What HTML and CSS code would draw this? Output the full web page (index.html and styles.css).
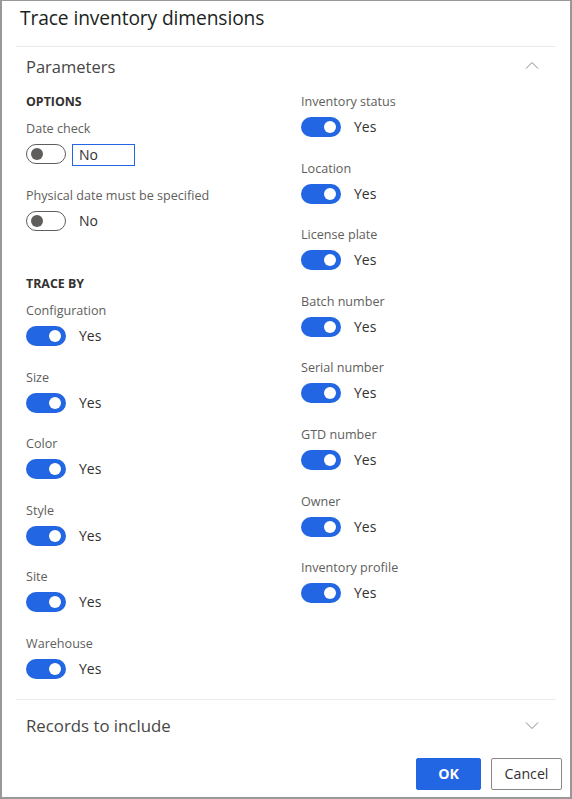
FILE: index.html
```html
<!DOCTYPE html>
<html>
<head>
<meta charset="utf-8">
<link rel="stylesheet" href="styles.css">
</head>
<body>
<div class="dialog">
  <div class="title">Trace inventory dimensions</div>
  <div class="section params">
    <div class="section-header">
      <span class="section-title">Parameters</span>
      <svg class="chev" width="14" height="8" viewBox="0 0 14 8"><polyline points="1,7.5 7,1.5 13,7.5" fill="none" stroke="#8a8886" stroke-width="1"/></svg>
    </div>
    <div class="columns">
      <div class="col">
        <div class="group-title">OPTIONS</div>
        <div class="field">
          <div class="label">Date check</div>
          <div class="control"><span class="toggle off"></span><span class="value boxed">No</span></div>
        </div>
        <div class="field">
          <div class="label">Physical date must be specified</div>
          <div class="control"><span class="toggle off"></span><span class="value">No</span></div>
        </div>
        <div class="group-title second">TRACE BY</div>
        <div class="field"><div class="label">Configuration</div><div class="control"><span class="toggle on"></span><span class="value">Yes</span></div></div>
        <div class="field"><div class="label">Size</div><div class="control"><span class="toggle on"></span><span class="value">Yes</span></div></div>
        <div class="field"><div class="label">Color</div><div class="control"><span class="toggle on"></span><span class="value">Yes</span></div></div>
        <div class="field"><div class="label">Style</div><div class="control"><span class="toggle on"></span><span class="value">Yes</span></div></div>
        <div class="field"><div class="label">Site</div><div class="control"><span class="toggle on"></span><span class="value">Yes</span></div></div>
        <div class="field last"><div class="label">Warehouse</div><div class="control"><span class="toggle on"></span><span class="value">Yes</span></div></div>
      </div>
      <div class="col">
        <div class="field"><div class="label">Inventory status</div><div class="control"><span class="toggle on"></span><span class="value">Yes</span></div></div>
        <div class="field"><div class="label">Location</div><div class="control"><span class="toggle on"></span><span class="value">Yes</span></div></div>
        <div class="field"><div class="label">License plate</div><div class="control"><span class="toggle on"></span><span class="value">Yes</span></div></div>
        <div class="field"><div class="label">Batch number</div><div class="control"><span class="toggle on"></span><span class="value">Yes</span></div></div>
        <div class="field"><div class="label">Serial number</div><div class="control"><span class="toggle on"></span><span class="value">Yes</span></div></div>
        <div class="field"><div class="label">GTD number</div><div class="control"><span class="toggle on"></span><span class="value">Yes</span></div></div>
        <div class="field"><div class="label">Owner</div><div class="control"><span class="toggle on"></span><span class="value">Yes</span></div></div>
        <div class="field"><div class="label">Inventory profile</div><div class="control"><span class="toggle on"></span><span class="value">Yes</span></div></div>
      </div>
    </div>
  </div>
  <div class="section records">
    <div class="section-header tall">
      <span class="section-title">Records to include</span>
      <svg class="chev" width="14" height="8" viewBox="0 0 14 8"><polyline points="1,0.5 7,6.5 13,0.5" fill="none" stroke="#8a8886" stroke-width="1"/></svg>
    </div>
  </div>
  <div class="footer">
    <button class="btn primary">OK</button>
    <button class="btn">Cancel</button>
  </div>
</div>
</body>
</html>
```

FILE: styles.css
```css
html, body {
  margin: 0;
  padding: 0;
  background: #ffffff;
}
body {
  font-family: "Open Sans", "Noto Sans", "Liberation Sans", sans-serif;
  color: #323130;
}
.dialog {
  width: 572px;
  height: 799px;
  box-sizing: border-box;
  border: 2px solid #9a9896;
  border-top-width: 1px;
  display: flex;
  flex-direction: column;
  background: #fff;
}
.title {
  height: 45px;
  box-sizing: border-box;
  padding: 4px 0 0 18px;
  font-size: 19.2px;
  line-height: 26px;
  color: #201f1e;
  letter-spacing: -0.1px;
}
.section {
  margin: 0 14px;
  border-top: 1px solid #edebe9;
}
.section-header {
  height: 38px;
  display: flex;
  align-items: center;
  justify-content: space-between;
  padding: 0 17px 0 10px;
}
.section-header.tall {
  height: 52px;
  padding-right: 17px;
}
.section-title {
  font-size: 16.5px;
  color: #484644;
}
.records .section-title {
  font-size: 16.8px;
}
.chev {
  display: block;
}
.params .chev {
  margin-top: -2px;
}
.columns {
  display: grid;
  grid-template-columns: 275px 1fr;
  padding: 8px 10px 0 10px;
}
.col {
  display: flex;
  flex-direction: column;
}
.group-title {
  font-size: 12.4px;
  font-weight: 700;
  line-height: 18px;
  margin-bottom: 9px;
  color: #323130;
}
.group-title.second {
  margin-top: 21.8px;
}
.field {
  height: 66.6px;
}
.col .field.last {
  height: 64px;
}
.label {
  font-size: 12.6px;
  line-height: 18px;
  color: #605e5c;
  white-space: nowrap;
}
.control {
  margin-top: 6px;
  display: flex;
  align-items: flex-start;
  height: 22px;
}
.toggle {
  box-sizing: border-box;
  width: 40px;
  height: 20px;
  border-radius: 10px;
  position: relative;
  flex: none;
}
.toggle::after {
  content: "";
  position: absolute;
  top: 3px;
  width: 12px;
  height: 12px;
  border-radius: 50%;
}
.toggle.off {
  border: 1px solid #605e5c;
  background: #fff;
}
.toggle.off::after {
  left: 4px;
  top: 3px;
  background: #605e5c;
}
.toggle.on {
  background: #2266e3;
}
.toggle.on::after {
  right: 5px;
  top: 4px;
  background: #fff;
}
.value {
  margin-left: 13px;
  font-size: 14px;
  line-height: 20px;
  color: #323130;
}
.value.boxed {
  margin-left: 6px;
  box-sizing: border-box;
  width: 63px;
  height: 22px;
  border: 1px solid #2266e3;
  padding-left: 6px;
  line-height: 20px;
}
.footer {
  display: flex;
  justify-content: flex-end;
  gap: 10px;
  padding: 6px 8px 0 0;
}
.btn {
  height: 32px;
  box-sizing: border-box;
  font-family: "Open Sans", "Noto Sans", "Liberation Sans", sans-serif;
  font-size: 14.2px;
  border-radius: 2px;
  border: 1px solid #8a8886;
  background: #fff;
  color: #323130;
  width: 71px;
  padding: 0;
}
.btn.primary {
  width: 65px;
  background: #2266e3;
  border-color: #2266e3;
  color: #fff;
  font-weight: 700;
}
```
